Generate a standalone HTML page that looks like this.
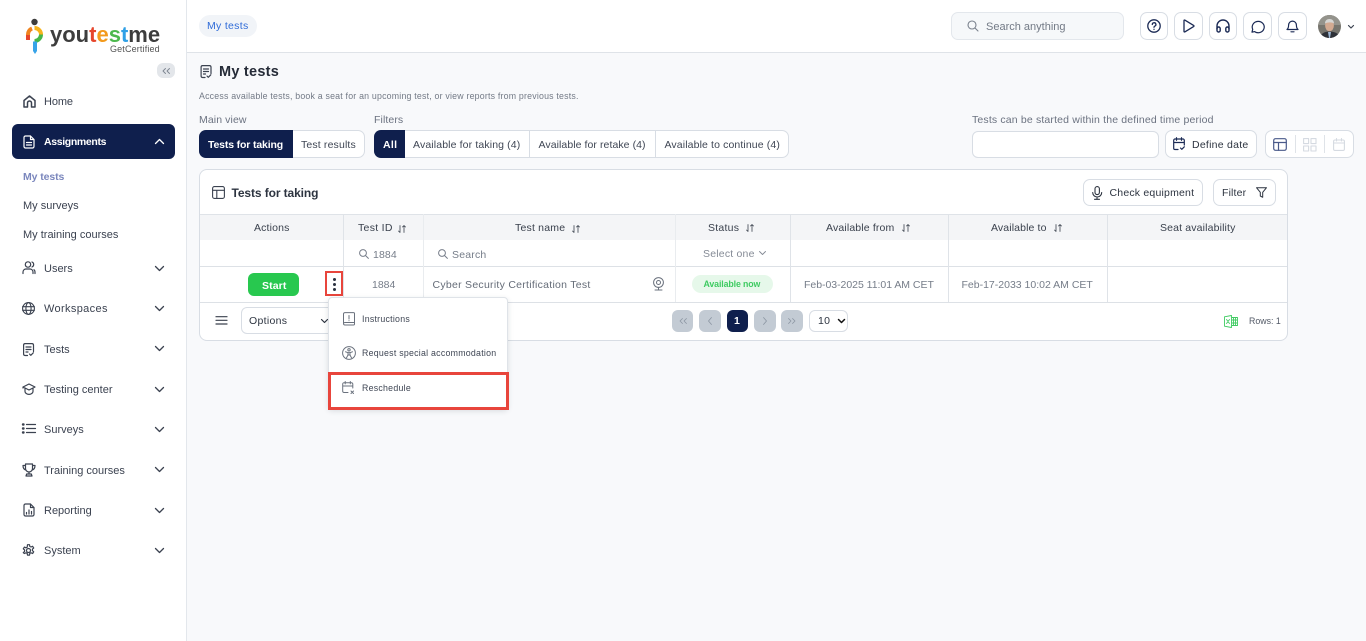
<!DOCTYPE html>
<html lang="en"><head><meta charset="utf-8"><title>My tests</title>
<style>
*{box-sizing:border-box}
html,body{margin:0;padding:0;width:1366px;height:641px;overflow:hidden;background:#f8f9fb;font-family:"Liberation Sans",sans-serif}
.a{position:absolute}
.t{position:absolute;white-space:nowrap;line-height:14px;height:14px;font-size:11px;color:#3f4654;letter-spacing:.3px}
.nav{color:#3b4250;font-size:11px;letter-spacing:0;margin-top:1px}
svg{position:absolute;overflow:visible;fill:none;stroke:#3b4250;stroke-width:1.5;stroke-linecap:round;stroke-linejoin:round}
.btn{position:absolute;background:#fff;border:1px solid #d8dde4;border-radius:7px}
.line{position:absolute;background:#dfe3e8}
.pg{position:absolute;top:310px;height:22px;background:#c3cbd4;border-radius:6px}
</style></head><body>

<!-- header -->
<div class="a" style="left:0;top:0;width:1366px;height:53px;background:#fff;border-bottom:1px solid #dfe3e8"></div>
<div class="a" style="left:199px;top:15px;width:58px;height:22px;background:#f1f4f8;border-radius:11px"></div>
<div class="t" style="left:207px;top:19px;color:#2f6bd8;font-size:10.5px;letter-spacing:.3px">My tests</div>

<div class="a" style="left:951px;top:12px;width:173px;height:28px;background:#f6f8fa;border:1px solid #e3e7ec;border-radius:7px"></div>
<svg style="left:967px;top:20px" width="12" height="12" viewBox="0 0 12 12"><g style="stroke:#7a818d;stroke-width:1.1"><circle cx="5" cy="5" r="4"/><path d="M8 8l3 3"/></g></svg>
<div class="t" style="left:986px;top:20px;color:#737a86;font-size:11px;letter-spacing:0">Search anything</div>

<div class="btn" style="left:1140px;top:12px;width:28px;height:28px"></div>
<div class="btn" style="left:1174px;top:12px;width:29px;height:28px"></div>
<div class="btn" style="left:1209px;top:12px;width:28px;height:28px"></div>
<div class="btn" style="left:1243px;top:12px;width:29px;height:28px"></div>
<div class="btn" style="left:1278px;top:12px;width:29px;height:28px"></div>
<svg style="left:1147px;top:19px;stroke:#1b2a55;stroke-width:1.3" width="14" height="14" viewBox="0 0 14 14"><circle cx="7" cy="7" r="6.2"/><path d="M5.3 5.5a1.8 1.8 0 1 1 2.6 1.6c-.6.3-.9.7-.9 1.2"/><path d="M7 10.300v.1"/></svg>
<svg style="left:1183px;top:19px;stroke:#1b2a55;stroke-width:1.3" width="12" height="14" viewBox="0 0 12 14"><path d="M1 1.500v11a.5.5 0 0 0 .8.4l9-5.500a.5.5 0 0 0 0-.8l-9-5.500a.5.5 0 0 0-.8.4z"/></svg>
<svg style="left:1216px;top:19px;stroke:#1b2a55;stroke-width:1.4" width="14" height="14" viewBox="0 0 14 14"><path d="M1 10V7a6 6 0 0 1 12 0v3"/><rect x="1" y="8" width="3.200" height="5" rx="1.500"/><rect x="9.800" y="8" width="3.200" height="5" rx="1.500"/></svg>
<svg style="left:1251px;top:20px;stroke:#1b2a55;stroke-width:1.200" width="14" height="13" viewBox="0 0 14 13"><path d="M1 12.200l2.600-.6A6 5.700 0 1 0 1.700 9.300z"/></svg>
<svg style="left:1286px;top:19px;stroke:#1b2a55;stroke-width:1.200" width="13" height="14" viewBox="0 0 13 14"><path d="M1 10.500h11c-1.200-1-1.600-2-1.600-4.500a3.900 3.900 0 0 0-7.800 0c0 2.500-.4 3.500-1.600 4.500z"/><path d="M5 12.800h3"/></svg>

<!-- avatar -->
<svg style="left:1318px;top:15px;stroke:none" width="23" height="23" viewBox="0 0 23 23"><defs><clipPath id="av"><circle cx="11.500" cy="11.500" r="11.500"/></clipPath></defs><g clip-path="url(#av)" style="stroke:none"><rect width="23" height="23" fill="#77756e" style="stroke:none"/><rect width="23" height="10" fill="#94938c" style="stroke:none"/><path d="M2 23c1-5 5-6.500 9.500-6.500S21 18 22 23z" fill="#2e3138" style="stroke:none"/><path d="M10 17h3l-1 6h-1z" fill="#9db8d6" style="stroke:none"/><ellipse cx="11.500" cy="10.500" rx="4.400" ry="5.800" fill="#d3aa92" style="stroke:none"/><path d="M7 8.500c0-3 2-4.500 4.500-4.500S16 5.500 16 8.500c-2-1.500-6-1.500-9 0z" fill="#d6d6d4" style="stroke:none"/></g></svg>
<svg style="left:1348px;top:24.500px;stroke:#3b4250;stroke-width:1.200" width="6" height="4" viewBox="0 0 6 4"><path d="M.5.500L3 3 5.500.500"/></svg>

<!-- sidebar -->
<div class="a" style="left:0;top:0;width:187px;height:641px;background:#fff;border-right:1px solid #e3e7ec"></div>

<!-- logo -->
<svg style="left:25px;top:17px;stroke:none" width="20" height="37" viewBox="0 0 20 37"><g style="stroke-linecap:butt;fill:none">
<circle cx="9.500" cy="5" r="3.200" fill="#3d3d3d" style="stroke:none"/>
<path d="M3 21v-3.500a6.500 6.500 0 0 1 4-6" style="stroke:#f0831e;stroke-width:4"/>
<path d="M3 18v5" style="stroke:#e6452c;stroke-width:4"/>
<path d="M9.500 11a6.500 6.500 0 0 1 6.500 6.500" style="stroke:#f6b31c;stroke-width:4"/>
<path d="M16 17.500a6.500 6.500 0 0 1-6.500 6.500" style="stroke:#45b649;stroke-width:4"/>
<path d="M8 24.500l0 9.500 2 3 2-3v-9.500z" fill="#37a3e8" style="stroke:none"/>
</g></svg>
<div class="t" style="left:50px;top:22px;height:26px;line-height:26px;font-size:22px;font-weight:bold;letter-spacing:0;color:#3d3d3d">you<span style="color:#e6452c">t</span><span style="color:#f39a1c">e</span><span style="color:#4cb84d">s</span><span style="color:#2fa0e6">t</span>me</div>
<div class="t" style="left:110px;top:42px;font-size:9px;letter-spacing:.15px;color:#555">GetCertified</div>

<div class="a" style="left:157px;top:63px;width:18px;height:15px;background:#e3e6ea;border-radius:6px"></div>
<svg style="left:162px;top:67.500px;stroke:#7d8590;stroke-width:.9" width="8" height="6" viewBox="0 0 8 6"><path d="M3.500.500L1 3l2.500 2.500M7.500.500L5 3l2.500 2.500"/></svg>

<svg style="left:23px;top:95px" width="13" height="13" viewBox="0 0 13 13"><path d="M1 12V5.500L6.500 1 12 5.500V12H8.500V8a2 2 0 0 0-4 0v4z"/></svg>
<div class="t nav" style="left:44px;top:94px;letter-spacing:-.1px">Home</div>

<div class="a" style="left:11.500px;top:124px;width:163.500px;height:34.500px;background:#0f1f4d;border-radius:6px"></div>
<svg style="left:23px;top:135px;stroke:#fff;stroke-width:1.200" width="12" height="14" viewBox="0 0 12 14"><path d="M7.500 1H2.500A1.500 1.500 0 0 0 1 2.500v9A1.500 1.500 0 0 0 2.500 13h7a1.500 1.500 0 0 0 1.500-1.500V4.500zM7.500 1v3.500H11M3.500 7.500h5M3.500 10h5"/></svg>
<div class="t" style="left:44px;top:135px;color:#fff;font-weight:bold;font-size:10.500px;letter-spacing:-.35px">Assignments</div>
<svg style="left:155px;top:139px;stroke:#fff;stroke-width:1.300" width="9" height="5" viewBox="0 0 9 5"><path d="M.5 4.500L4.500.500l4 4"/></svg>

<div class="t" style="left:23px;top:170px;color:#7b87bd;font-weight:bold;font-size:10.500px;letter-spacing:-.1px">My tests</div>
<div class="t nav" style="left:23px;top:198px">My surveys</div>
<div class="t nav" style="left:23px;top:227px">My training courses</div>

<svg style="left:22px;top:261px;stroke-width:1.200" width="14" height="13" viewBox="0 0 14 13"><circle cx="6" cy="3.500" r="2.700"/><path d="M1 12.500V11a3 3 0 0 1 3-3h4a3 3 0 0 1 3 3v1.500M10 1a2.700 2.700 0 0 1 0 5M13 12.500V11a3 3 0 0 0-1-2.300"/></svg>
<div class="t nav" style="left:44px;top:261px">Users</div>
<svg style="left:22px;top:302px;stroke-width:1.100" width="13" height="13" viewBox="0 0 13 13"><circle cx="6.500" cy="6.500" r="5.900"/><ellipse cx="6.500" cy="6.500" rx="2.600" ry="5.900"/><path d="M.6 4.700h11.800M.6 8.300h11.800"/></svg>
<div class="t nav" style="left:44px;top:301px;letter-spacing:.35px">Workspaces</div>
<svg style="left:23px;top:343px;stroke-width:1.200" width="11" height="13" viewBox="0 0 11 13"><path d="M4.500 12.500H2A1.500 1.500 0 0 1 .6 11V2A1.500 1.500 0 0 1 2 .6h7A1.500 1.500 0 0 1 10.500 2v6.500M3 4h5M3 6.500h5M3 9h2M6.500 11l1.300 1.300 2.500-2.500"/></svg>
<div class="t nav" style="left:44px;top:342px">Tests</div>
<svg style="left:22px;top:383px;stroke-width:1.200" width="14" height="12" viewBox="0 0 14 12"><path d="M7 1L1 4l6 3 6-3zM3 5.500v3C3 10 5 11.400 7 11.400S11 10 11 8.500v-3M1 4v1"/></svg>
<div class="t nav" style="left:44px;top:382px">Testing center</div>
<svg style="left:22px;top:423px;stroke-width:1.200" width="14" height="11" viewBox="0 0 14 11"><path d="M4.500 1.500H13.500M4.500 5.500H13.500M4.500 9.500H13.500"/><path d="M1 1.500h.5M1 5.500h.5M1 9.500h.5" style="stroke-width:2.400"/></svg>
<div class="t nav" style="left:44px;top:422px">Surveys</div>
<svg style="left:22px;top:463px;stroke-width:1.200" width="14" height="14" viewBox="0 0 14 14"><path d="M3.500 1h7v4.500a3.500 3.500 0 0 1-7 0zM3.500 2.500H1c0 2.500 1 4 2.800 4.500M10.500 2.500H13c0 2.500-1 4-2.800 4.500M7 9v2M4 13h6l-.7-2H4.700z"/></svg>
<div class="t nav" style="left:44px;top:463px">Training courses</div>
<svg style="left:23px;top:503px;stroke-width:1.200" width="12" height="14" viewBox="0 0 12 14"><path d="M7.500 1H2.500A1.500 1.500 0 0 0 1 2.500v9A1.500 1.500 0 0 0 2.500 13h7a1.500 1.500 0 0 0 1.500-1.500V4.500zM7.500 1v3.500H11M3.500 11V9.500M6 11V7M8.500 11V8.500"/></svg>
<div class="t nav" style="left:44px;top:503px">Reporting</div>
<svg style="left:22px;top:544px;stroke-width:1.200" width="13" height="13" viewBox="0 0 13 13"><circle cx="6.500" cy="6.500" r="2"/><path d="M5.500.7h2l.3 1.700 1.200.6 1.600-.7 1.100 1.700-1.300 1.200v1.400l1.300 1.200-1.100 1.700-1.600-.7-1.200.6-.3 1.700h-2l-.3-1.700-1.200-.6-1.600.7L1.300 8.600l1.300-1.200V6L1.300 4.800l1.100-1.700 1.600.7 1.200-.6z"/></svg>
<div class="t nav" style="left:44px;top:543px">System</div>

<svg style="left:155px;top:265.500px;stroke-width:1.300" width="9" height="5" viewBox="0 0 9 5"><path d="M.5.500l4 4 4-4"/></svg>
<svg style="left:155px;top:305.500px;stroke-width:1.300" width="9" height="5" viewBox="0 0 9 5"><path d="M.5.500l4 4 4-4"/></svg>
<svg style="left:155px;top:346px;stroke-width:1.300" width="9" height="5" viewBox="0 0 9 5"><path d="M.5.500l4 4 4-4"/></svg>
<svg style="left:155px;top:386.500px;stroke-width:1.300" width="9" height="5" viewBox="0 0 9 5"><path d="M.5.500l4 4 4-4"/></svg>
<svg style="left:155px;top:426.500px;stroke-width:1.300" width="9" height="5" viewBox="0 0 9 5"><path d="M.5.500l4 4 4-4"/></svg>
<svg style="left:155px;top:467px;stroke-width:1.300" width="9" height="5" viewBox="0 0 9 5"><path d="M.5.500l4 4 4-4"/></svg>
<svg style="left:155px;top:507.500px;stroke-width:1.300" width="9" height="5" viewBox="0 0 9 5"><path d="M.5.500l4 4 4-4"/></svg>
<svg style="left:155px;top:547.500px;stroke-width:1.300" width="9" height="5" viewBox="0 0 9 5"><path d="M.5.500l4 4 4-4"/></svg>

<!-- page heading -->
<svg style="left:200px;top:65px;stroke-width:1.200" width="12" height="13" viewBox="0 0 11 13"><path d="M4.500 12.500H2A1.500 1.500 0 0 1 .6 11V2A1.500 1.500 0 0 1 2 .6h7A1.500 1.500 0 0 1 10.500 2v6.500M3 4h5M3 6.500h5M3 9h2M6.500 11l1.300 1.300 2.500-2.500"/></svg>
<div class="t" style="left:219px;top:65px;font-size:14.500px;font-weight:bold;color:#252b37;letter-spacing:.25px">My tests</div>
<div class="t" style="left:199px;top:89px;font-size:8.800px;color:#737a86;letter-spacing:.2px">Access available tests, book a seat for an upcoming test, or view reports from previous tests.</div>
<div class="t" style="left:199px;top:113px;font-size:10.500px;color:#6b7280;letter-spacing:.1px">Main view</div>
<div class="t" style="left:374px;top:113px;font-size:10.500px;color:#6b7280;letter-spacing:.1px">Filters</div>
<div class="t" style="left:972px;top:113px;font-size:10.500px;color:#6b7280;letter-spacing:.16px">Tests can be started within the defined time period</div>

<div class="a" style="left:198.500px;top:130px;width:166.500px;height:28px;background:#fff;border:1px solid #d8dde4;border-radius:7px"></div>
<div class="a" style="left:198.500px;top:130px;width:94px;height:28px;background:#0f1f4d;border-radius:7px 0 0 7px"></div>
<div class="t" style="left:208px;top:138px;color:#fff;font-weight:bold;font-size:10.500px;letter-spacing:-.15px">Tests for taking</div>
<div class="t" style="left:301px;top:138px;font-size:10.500px;letter-spacing:.15px">Test results</div>

<div class="a" style="left:374px;top:130px;width:415px;height:28px;background:#fff;border:1px solid #d8dde4;border-radius:7px"></div>
<div class="a" style="left:374px;top:130px;width:31px;height:28px;background:#0f1f4d;border-radius:7px 0 0 7px"></div>
<div class="line" style="left:529px;top:131px;width:1px;height:26px;background:#d8dde4"></div>
<div class="line" style="left:655px;top:131px;width:1px;height:26px;background:#d8dde4"></div>
<div class="t" style="left:383px;top:138px;color:#fff;font-weight:bold;font-size:10.500px">All</div>
<div class="t" style="left:413px;top:138px;font-size:10.500px;letter-spacing:.13px">Available for taking (4)</div>
<div class="t" style="left:538.500px;top:138px;font-size:10.500px;letter-spacing:.07px">Available for retake (4)</div>
<div class="t" style="left:664.500px;top:138px;font-size:10.500px;letter-spacing:.12px">Available to continue (4)</div>

<div class="a" style="left:972px;top:131px;width:187px;height:27px;background:#fff;border:1px solid #d8dde4;border-radius:6px"></div>
<div class="btn" style="left:1165px;top:130px;width:92px;height:28px"></div>
<svg style="left:1173px;top:137px;stroke:#1b2a55;stroke-width:1.200" width="12" height="14" viewBox="0 0 12 14"><path d="M5 12.500H2A1.300 1.300 0 0 1 .7 11.200V3.300A1.300 1.300 0 0 1 2 2h8a1.300 1.300 0 0 1 1.300 1.300V8M3.500.7v2.600M8.500.7v2.600M.7 5.500h10.600M7.500 11l1.300 1.300 2.500-2.500"/></svg>
<div class="t" style="left:1192px;top:138px;font-size:10.500px;color:#2d3440;letter-spacing:.25px">Define date</div>
<div class="btn" style="left:1265px;top:130px;width:89px;height:28px"></div>
<svg style="left:1273px;top:137.500px;stroke:#4a5a8a;stroke-width:1.200" width="14" height="13" viewBox="0 0 14 13"><rect x=".7" y=".7" width="12.600" height="11.600" rx="1.800"/><path d="M.7 4.500h12.600M5.500 4.500v7.800"/></svg>
<div class="line" style="left:1295px;top:135px;width:1px;height:18px"></div>
<svg style="left:1303px;top:137.500px;stroke:#d5dae1;stroke-width:1.100" width="14" height="14" viewBox="0 0 14 14"><rect x=".6" y=".6" width="5" height="5"/><rect x="8" y=".6" width="5" height="5"/><rect x=".6" y="8" width="5" height="5"/><rect x="8" y="8" width="5" height="5"/></svg>
<div class="line" style="left:1324px;top:135px;width:1px;height:18px"></div>
<svg style="left:1333px;top:137.500px;stroke:#d5dae1;stroke-width:1.100" width="12" height="13" viewBox="0 0 12 13"><rect x=".6" y="2" width="10.800" height="10.400" rx="1.300"/><path d="M.6 5h10.800M3.500.6v2.400M8.500.6v2.400"/></svg>

<!-- card -->
<div class="a" style="left:199px;top:169px;width:1089px;height:172px;background:#fff;border:1px solid #d8dde4;border-radius:8px"></div>
<svg style="left:212px;top:186px;stroke-width:1.100" width="13" height="13" viewBox="0 0 13 13"><rect x=".6" y=".6" width="11.800" height="11.800" rx="1.800"/><path d="M.6 4.300h11.800M4.800 4.300v8.100"/></svg>
<div class="t" style="left:231.500px;top:185.500px;font-size:12px;font-weight:bold;color:#2d3440;letter-spacing:-.1px">Tests for taking</div>
<div class="btn" style="left:1083px;top:179px;width:120px;height:27px"></div>
<svg style="left:1092px;top:186px;stroke:#2d3440;stroke-width:1.100" width="10" height="14" viewBox="0 0 10 14"><rect x="3" y=".6" width="4.400" height="8" rx="2.200"/><path d="M.7 6.500a4.500 4.500 0 0 0 9 0M5 11v2M2.500 13.300h5"/></svg>
<div class="t" style="left:1109.500px;top:185.500px;font-size:10.500px;color:#2d3440;letter-spacing:.2px">Check equipment</div>
<div class="btn" style="left:1213px;top:179px;width:63px;height:27px"></div>
<div class="t" style="left:1222px;top:185.500px;font-size:10.500px;color:#2d3440;letter-spacing:.15px">Filter</div>
<svg style="left:1256px;top:187px;stroke:#2d3440;stroke-width:1" width="11" height="11" viewBox="0 0 11 11"><path d="M.5.700h10L6.700 5.300v5L4.300 9V5.300z"/></svg>

<!-- table -->
<div class="a" style="left:200px;top:215px;width:1087px;height:25px;background:#f4f5f7"></div>
<div class="line" style="left:200px;top:214px;width:1087px;height:1px"></div>
<div class="line" style="left:200px;top:266px;width:1087px;height:1px;background:#dde1e6"></div>
<div class="line" style="left:200px;top:302px;width:1087px;height:1px;background:#dde1e6"></div>
<div class="line" style="left:343px;top:214px;width:1px;height:88px"></div>
<div class="line" style="left:423px;top:214px;width:1px;height:88px;background:#e9ecef"></div>
<div class="line" style="left:675px;top:214px;width:1px;height:88px;background:#e9ecef"></div>
<div class="line" style="left:790px;top:214px;width:1px;height:88px"></div>
<div class="line" style="left:948px;top:214px;width:1px;height:88px"></div>
<div class="line" style="left:1107px;top:214px;width:1px;height:88px"></div>

<div class="t" style="left:254px;top:221px;font-size:10.500px;color:#3a414d;letter-spacing:.15px">Actions</div>
<div class="t" style="left:358px;top:221px;font-size:10.500px;color:#3a414d;letter-spacing:.3px">Test ID</div>
<div class="t" style="left:515px;top:221px;font-size:10.500px;color:#3a414d;letter-spacing:.2px">Test name</div>
<div class="t" style="left:708px;top:221px;font-size:10.500px;color:#3a414d;letter-spacing:.25px">Status</div>
<div class="t" style="left:826px;top:221px;font-size:10.500px;color:#3a414d;letter-spacing:.15px">Available from</div>
<div class="t" style="left:991px;top:221px;font-size:10.500px;color:#3a414d;letter-spacing:.12px">Available to</div>
<div class="t" style="left:1160px;top:221px;font-size:10.500px;color:#3a414d;letter-spacing:.15px">Seat availability</div>
<svg style="left:398px;top:224.500px;stroke:#3a414d;stroke-width:.8" width="8" height="8" viewBox="0 0 8 8"><path d="M2 .5v7M.5 6l1.500 1.500M6 7.500v-7M4.500 2L6 .5 7.500 2"/></svg>
<svg style="left:572px;top:224.500px;stroke:#3a414d;stroke-width:.8" width="8" height="8" viewBox="0 0 8 8"><path d="M2 .5v7M.5 6l1.500 1.500M6 7.500v-7M4.500 2L6 .5 7.500 2"/></svg>
<svg style="left:746px;top:224px;stroke:#3a414d;stroke-width:.8" width="8" height="8" viewBox="0 0 8 8"><path d="M2 .5v7M.5 6l1.500 1.500M6 7.500v-7M4.500 2L6 .5 7.500 2"/></svg>
<svg style="left:902px;top:224px;stroke:#3a414d;stroke-width:.8" width="8" height="8" viewBox="0 0 8 8"><path d="M2 .5v7M.5 6l1.500 1.500M6 7.500v-7M4.500 2L6 .5 7.500 2"/></svg>
<svg style="left:1054px;top:224px;stroke:#3a414d;stroke-width:.8" width="8" height="8" viewBox="0 0 8 8"><path d="M2 .5v7M.5 6l1.500 1.500M6 7.500v-7M4.500 2L6 .5 7.500 2"/></svg>

<svg style="left:359px;top:249px;stroke:#777e8a;stroke-width:1" width="10" height="10" viewBox="0 0 10 10"><circle cx="4" cy="4" r="3.400"/><path d="M6.600 6.600l2.800 2.800"/></svg>
<div class="t" style="left:373px;top:247.500px;font-size:10.500px;color:#767d89;letter-spacing:.1px">1884</div>
<svg style="left:438px;top:249px;stroke:#777e8a;stroke-width:1" width="10" height="10" viewBox="0 0 10 10"><circle cx="4" cy="4" r="3.400"/><path d="M6.600 6.600l2.800 2.800"/></svg>
<div class="t" style="left:452px;top:247.500px;font-size:10.500px;color:#767d89;letter-spacing:.2px">Search</div>
<div class="t" style="left:703px;top:247px;font-size:10.500px;color:#858b96;letter-spacing:.2px">Select one</div>
<svg style="left:759px;top:250.500px;stroke:#858b96;stroke-width:.9" width="7" height="4" viewBox="0 0 7 4"><path d="M.5.500l3 3 3-3"/></svg>

<div class="a" style="left:248px;top:273px;width:51px;height:23px;background:#28c84f;border-radius:6px"></div>
<div class="t" style="left:262px;top:279px;color:#fff;font-weight:bold;font-size:10.500px;letter-spacing:.1px">Start</div>
<div class="a" style="left:325px;top:271px;width:18px;height:25px;border:2px solid #e8453c"></div>
<div class="a" style="left:333px;top:278px;width:3px;height:3px;background:#2a3140;border-radius:50%"></div>
<div class="a" style="left:333px;top:283px;width:3px;height:3px;background:#2a3140;border-radius:50%"></div>
<div class="a" style="left:333px;top:288px;width:3px;height:3px;background:#2a3140;border-radius:50%"></div>
<div class="t" style="left:372px;top:277.500px;font-size:10.500px;color:#767d89;letter-spacing:0">1884</div>
<div class="t" style="left:432.500px;top:277.500px;font-size:10.500px;color:#656c78;letter-spacing:.27px">Cyber Security Certification Test</div>
<svg style="left:653px;top:277px;stroke:#6a717d;stroke-width:1" width="11" height="14" viewBox="0 0 11 14"><circle cx="5.500" cy="5.500" r="4.900"/><circle cx="5.500" cy="5.500" r="2"/><path d="M5.500 10.400v2.200M2 13h7"/></svg>
<div class="a" style="left:692px;top:275px;width:81px;height:18px;background:#e6f8ea;border-radius:9px"></div>
<div class="t" style="left:703.500px;top:277px;font-size:8.800px;font-weight:bold;color:#3fcb62;letter-spacing:-.12px">Available now</div>
<div class="t" style="left:804px;top:277.500px;font-size:10.500px;color:#767d89;letter-spacing:-.03px">Feb-03-2025 11:01 AM CET</div>
<div class="t" style="left:961.500px;top:277.500px;font-size:10.500px;color:#767d89;letter-spacing:0">Feb-17-2033 10:02 AM CET</div>

<!-- footer -->
<svg style="left:216px;top:316px;stroke:#3a414d;stroke-width:1.200" width="11" height="9" viewBox="0 0 11 9"><path d="M0 .7h11M0 4.300h11M0 8h11"/></svg>
<div class="a" style="left:241px;top:307px;width:100px;height:27px;background:#fff;border:1px solid #d8dde4;border-radius:6px"></div>
<div class="t" style="left:249px;top:313.500px;font-size:10.500px;color:#2d3440;letter-spacing:.3px">Options</div>
<svg style="left:321px;top:319px;stroke:#2d3440;stroke-width:1.200" width="7" height="4" viewBox="0 0 7 4"><path d="M.5.500l3 3 3-3"/></svg>

<div class="pg" style="left:672px;width:21px"></div>
<div class="pg" style="left:699px;width:22px"></div>
<div class="pg" style="left:727px;width:21px;background:#0f1f4d"></div>
<div class="pg" style="left:754px;width:22px"></div>
<div class="pg" style="left:781px;width:22px"></div>
<svg style="left:679px;top:317.500px;stroke:#8b95a2;stroke-width:.8" width="8" height="6" viewBox="0 0 8 6"><path d="M3.500.500L1 3l2.500 2.500M7.500.500L5 3l2.500 2.500"/></svg>
<svg style="left:708px;top:317px;stroke:#8b95a2;stroke-width:.8" width="4" height="8" viewBox="0 0 4 8"><path d="M3.500.500L.5 4l3 3.500"/></svg>
<div class="t" style="left:734px;top:314px;color:#fff;font-weight:bold;font-size:10.500px;letter-spacing:0">1</div>
<svg style="left:763px;top:317px;stroke:#8b95a2;stroke-width:.8" width="4" height="8" viewBox="0 0 4 8"><path d="M.5.500l3 3.500-3 3.500"/></svg>
<svg style="left:788px;top:317.500px;stroke:#8b95a2;stroke-width:.8" width="8" height="6" viewBox="0 0 8 6"><path d="M.5.500L3 3 .5 5.500M4.500.500L7 3 4.500 5.500"/></svg>
<div class="a" style="left:809px;top:310px;width:39px;height:22px;background:#fff;border:1px solid #d8dde4;border-radius:6px"></div>
<div class="t" style="left:818px;top:314px;font-size:10.500px;color:#2d3440;letter-spacing:.3px">10</div>
<svg style="left:838px;top:319px;stroke:#111;stroke-width:1.500" width="7" height="4" viewBox="0 0 7 4"><path d="M.5.500l3 3 3-3"/></svg>

<svg style="left:1224px;top:315px;stroke:#3fcb62;stroke-width:.9" width="14" height="13" viewBox="0 0 14 13"><path d="M.5 1.800L7.500.5v12L.5 11.200zM7.500 2.500h6v8h-6M9.500 2.500v8M11.500 2.500v8M7.500 5h6M7.500 8h6M2.500 4.500l3 4M5.500 4.500l-3 4"/></svg>
<div class="t" style="left:1249px;top:314px;font-size:8.800px;color:#525966;letter-spacing:0">Rows: 1</div>

<!-- popup -->
<div class="a" style="left:328px;top:297px;width:180px;height:112px;background:#fff;border:1px solid #dfe3e8;border-radius:4px;box-shadow:0 2px 6px rgba(30,40,60,.14)"></div>
<svg style="left:343px;top:312px;stroke:#6a717d;stroke-width:1" width="12" height="14" viewBox="0 0 12 14"><path d="M2 .6h8.500a1 1 0 0 1 1 1V12a1 1 0 0 1-1 1H2A1.500 1.500 0 0 1 .5 11.500V2A1.500 1.500 0 0 1 2 .6zM.5 11.500A1.500 1.500 0 0 1 2 10.500h9.500M6 3.500v3.500M6 8.600v.2"/></svg>
<div class="t" style="left:362px;top:312px;font-size:8.800px;color:#3f4654;letter-spacing:.25px">Instructions</div>
<svg style="left:342px;top:346px;stroke:#6a717d;stroke-width:1" width="14" height="14" viewBox="0 0 14 14"><circle cx="7" cy="7" r="6.400"/><circle cx="7" cy="3.800" r="1.200"/><path d="M3.500 5.800l2.500.8h2l2.500-.8M6 6.600V9l-1.500 2.800M8 6.600V9l1.500 2.800M6 9h2"/></svg>
<div class="t" style="left:362px;top:346px;font-size:8.800px;color:#3f4654;letter-spacing:.25px">Request special accommodation</div>
<svg style="left:342px;top:381px;stroke:#6a717d;stroke-width:1" width="13" height="13" viewBox="0 0 13 13"><path d="M6 11.500H2A1.300 1.300 0 0 1 .7 10.200V3A1.300 1.300 0 0 1 2 1.700h7.500A1.300 1.300 0 0 1 10.800 3v4M3.200.5v2.400M8.300.5v2.400M.7 5h10.100M9 10l2.500 2.500M11.500 10L9 12.500"/></svg>
<div class="t" style="left:362px;top:381px;font-size:8.800px;color:#3f4654;letter-spacing:.25px">Reschedule</div>
<div class="a" style="left:328px;top:372px;width:181px;height:38px;border:3px solid #e8453c"></div>

</body></html>
